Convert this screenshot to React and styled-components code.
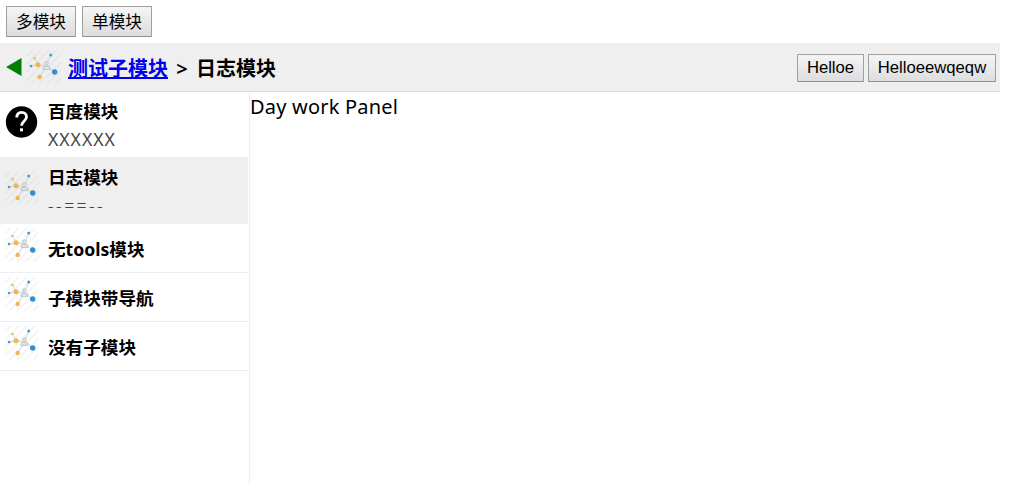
import React from "react";
import styled, { createGlobalStyle } from "styled-components";

const GlobalStyle = createGlobalStyle`
  body {
    margin: 0;
    background: #fff;
    color: #000;
    overflow: hidden;
    font-family: "Noto Sans", "Noto Sans CJK SC", sans-serif;
    font-size: 20px;
  }
  * { box-sizing: border-box; }
`;

const Page = styled.div`
  width: 1000px;
  height: 484px;
  display: flex;
  flex-direction: column;
`;

const Switcher = styled.div`
  display: flex;
  gap: 6px;
  padding: 6px;
  height: 43px;
`;

const Button = styled.button`
  width: ${(p) => p.$width}px;
  height: ${(p) => p.$height || 28}px;
  padding: ${(p) => (p.$height ? "2px 0 0" : "0")};
  border: 1px solid #a0a0a0;
  border-bottom-color: #8f8f8f;
  border-radius: 1px;
  background: linear-gradient(#f5f5f5, #dddddd);
  color: #000;
  font: 16.67px/20px "Liberation Sans", "Noto Sans CJK SC", sans-serif;
  white-space: nowrap;
`;

const Header = styled.header`
  display: flex;
  align-items: center;
  height: 49px;
  padding: 0 4px 0 6px;
  background: #efefef;
  border-bottom: 1px solid #ddd;
`;

const BackArrow = styled.svg`
  width: 16px;
  height: 18px;
  margin-right: 4px;
`;

const Crumbs = styled.div`
  display: flex;
  flex: 1;
  margin-left: 6px;
  line-height: 28px;
  padding-top: 4px;
  font-weight: 700;
  white-space: nowrap;
`;

const CrumbLink = styled.a`
  color: #0000ee;
  text-decoration: underline;
  text-decoration-thickness: 2px;
  text-underline-offset: 1px;
  text-decoration-skip-ink: none;
`;

const Separator = styled.span`
  width: 28px;
  text-align: center;
  font-weight: 600;
`;

const Tools = styled.div`
  display: flex;
  gap: 4px;
  padding-top: 2px;
`;

const Body = styled.div`
  display: flex;
  flex: 1;
  padding-top: 1px;
`;

const Sidebar = styled.nav`
  width: 250px;
  padding-right: 1px;
  border-right: 1px solid #eee;
`;

const Item = styled.div`
  display: flex;
  align-items: ${(p) => (p.$simple ? "flex-start" : "center")};
  width: 248px;
  height: ${(p) => p.$height}px;
  padding: ${(p) => (p.$simple ? "3px 0 0 4px" : "0 0 0 4px")};
  background: ${(p) => (p.$active ? "#efefef" : "#fff")};
  border-bottom: 1px solid ${(p) => (p.$active ? "#efefef" : p.$simple ? "#eee" : "#fff")};
`;

const ItemIcon = styled.div`
  display: flex;
  width: 36px;
  height: 36px;
  margin-top: ${(p) => p.$shift || 0}px;
`;

const ItemText = styled.div`
  margin-left: 8px;
  padding-top: ${(p) => p.$top || 0}px;
  white-space: nowrap;
`;

const ItemTitle = styled.div`
  font-size: 17.6px;
  line-height: 28px;
  font-weight: 700;
`;

const ItemDescription = styled.div`
  height: 28px;
  font-size: 17.6px;
  line-height: 28px;
  font-weight: ${(p) => p.$weight};
  color: #444;
  letter-spacing: ${(p) => p.$spacing}px;
`;

const Panel = styled.main`
  flex: 1;
  line-height: 28px;
  letter-spacing: 0.2px;
`;

const IconSvg = styled.svg`
  display: block;
  flex: none;
  width: 36px;
  height: 36px;
`;

function NetworkIcon({ dark }) {
  const stripe = dark ? "#e8e8e8" : "#f5f5f5";
  return (
    <IconSvg viewBox="0 0 36 36">
      <path
        d="M1 7 7 1M1 15 15 1M1 23 23 1M1 31 31 1M5 35 35 5M13 35 35 13M21 35 35 21M29 35 35 29"
        stroke={stripe}
        strokeWidth="1.8"
      />
      <path d="M8.5 9 12 15.7 5 17M12 15.7 20.5 17 24.7 6M20.5 17 28.7 23M20.5 17 13.7 28" fill="none" stroke="#cbd0d4" strokeWidth="0.8" />
      <path d="M17 20.3v-1.2q0-1.6 2-1.8h3q2 .2 2 1.8v1.2z" fill="#e5e7e8" stroke="#b9c0c5" strokeWidth="1" />
      <circle cx="20.5" cy="14.5" r="1.7" fill="#e5e7e8" stroke="#b9c0c5" strokeWidth="1" />
      <circle cx="12" cy="15.7" r="2.5" fill="#f0b653" />
      <circle cx="13.7" cy="28" r="2.2" fill="#f0b653" />
      <circle cx="8.5" cy="9" r="1.3" fill="#e9bd70" />
      <circle cx="5" cy="17" r="1.3" fill="#4a9ad2" />
      <circle cx="24.7" cy="6" r="1.5" fill="#4a9ad2" />
      <circle cx="28.7" cy="23" r="2.7" fill="#2f8fd2" />
    </IconSvg>
  );
}

function HelpIcon() {
  return (
    <IconSvg viewBox="0 0 36 36">
      <circle cx="17.5" cy="18" r="15.7" fill="#000" />
      <path d="M12.8 13.5C12.8 10.2 14.8 8.4 17.6 8.4s4.9 1.8 4.9 4.6c0 3.8-4.9 4.2-4.9 8.7" fill="none" stroke="#fff" strokeWidth="2.8" />
      <rect x="16" y="24.3" width="3" height="3" fill="#fff" />
    </IconSvg>
  );
}

const simpleItems = ["无tools模块", "子模块带导航", "没有子模块"];

export default function App() {
  return (
    <>
      <GlobalStyle />
      <Page>
        <Switcher>
          <Button $width={70} $height={31}>多模块</Button>
          <Button $width={70} $height={31}>单模块</Button>
        </Switcher>
        <Header>
          <BackArrow viewBox="0 0 16 18">
            <path d="M0 9 15.5 0v18z" fill="#008000" />
          </BackArrow>
          <NetworkIcon dark />
          <Crumbs>
            <CrumbLink href="#">测试子模块</CrumbLink>
            <Separator>&gt;</Separator>
            <span>日志模块</span>
          </Crumbs>
          <Tools>
            <Button $width={67}>Helloe</Button>
            <Button $width={128}>Helloeewqeqw</Button>
          </Tools>
        </Header>
        <Body>
          <Sidebar>
            <Item $height={64}>
              <ItemIcon $shift={-5}><HelpIcon /></ItemIcon>
              <ItemText>
                <ItemTitle>百度模块</ItemTitle>
                <ItemDescription $spacing={1} $weight={400}>XXXXXX</ItemDescription>
              </ItemText>
            </Item>
            <Item $height={67} $active>
              <ItemIcon $shift={-5}><NetworkIcon dark /></ItemIcon>
              <ItemText $top={2}>
                <ItemTitle>日志模块</ItemTitle>
                <ItemDescription $spacing={2.4} $weight={300}>--==--</ItemDescription>
              </ItemText>
            </Item>
            {simpleItems.map((title) => (
              <Item key={title} $height={49} $simple>
                <ItemIcon><NetworkIcon /></ItemIcon>
                <ItemText $top={8}>
                  <ItemTitle>{title}</ItemTitle>
                </ItemText>
              </Item>
            ))}
          </Sidebar>
          <Panel>Day work Panel</Panel>
        </Body>
      </Page>
    </>
  );
}
